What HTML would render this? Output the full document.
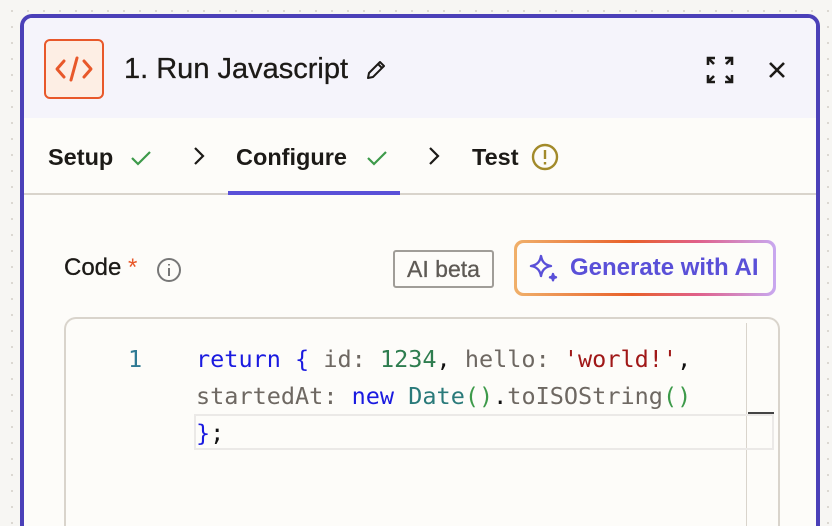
<!DOCTYPE html>
<html><head><style>
*{box-sizing:border-box;margin:0;padding:0}
html,body{width:832px;height:526px;overflow:hidden}
body{background:#f7f6f3;background-image:radial-gradient(#d9d6cf 1px,transparent 1.2px);background-size:16px 16px;background-position:4px 3px;font-family:"Liberation Sans",sans-serif;position:relative}
.panel{position:absolute;left:20px;top:14px;width:800px;height:512px;border:4px solid #4b40b8;border-bottom:none;border-radius:12px 12px 0 0;background:#fdfcf9;overflow:hidden}
.hdr{height:100px;background:#f5f4fb;position:relative}
.logo{position:absolute;left:20px;top:21px;width:60px;height:60px;border:2px solid #e8582a;border-radius:6px;background:#fdeee4}
.title{position:absolute;left:100px;top:35px;font-size:29px;color:#1c1a17;-webkit-text-stroke:0.3px #1c1a17}
.tabs{height:77px;border-bottom:2px solid #d9d4cc;position:relative;font-size:23.5px;font-weight:bold;color:#1c1a17}
.tabs span{position:absolute;top:26px}
.ul{position:absolute;left:204px;bottom:-2px;width:172px;height:4px;background:#5a50d8}
.mono{font-family:"DejaVu Sans Mono",monospace;font-size:23.5px;line-height:37px;white-space:pre}
</style></head><body>
<div class="panel">
 <div class="hdr">
  <div class="logo"><svg width="56" height="56" viewBox="0 0 56 56" fill="none" stroke="#e8582a" stroke-width="3" stroke-linecap="round" stroke-linejoin="round"><path d="M18 20l-7 8 7 8M38 20l7 8-7 8M31 17l-6 22"/></svg></div>
  <div class="title">1. Run Javascript</div>
  <svg style="position:absolute;left:340px;top:40px" width="24" height="24" viewBox="0 0 24 24" fill="none" stroke="#1c1a17" stroke-width="2" stroke-linejoin="round"><path d="M4 20l1-5L16 4l4 4L9 19z M14 6l4 4"/></svg>
  <svg style="position:absolute;left:682px;top:38px" width="28" height="28" viewBox="0 0 28 28" fill="none" stroke="#1c1a17" stroke-width="2.6"><path d="M2 9V2h7M2 2l6 6M26 9V2h-7M26 2l-6 6M2 19v7h7M2 26l6-6M26 19v7h-7M26 26l-6-6"/></svg>
  <svg style="position:absolute;left:744px;top:43px" width="18" height="18" viewBox="0 0 18 18" stroke="#1c1a17" stroke-width="2.6"><path d="M2 2l14 14M16 2L2 16"/></svg>
 </div>
 <div class="tabs">
  <span style="left:24px">Setup</span>
  <svg style="position:absolute;left:106px;top:31px" width="22" height="18" viewBox="0 0 22 18" fill="none" stroke="#3d9a4a" stroke-width="2.2"><path d="M2 9l6 6L20 3"/></svg>
  <svg style="position:absolute;left:168px;top:27px" width="14" height="22" viewBox="0 0 14 22" fill="none" stroke="#1c1a17" stroke-width="2.2"><path d="M3 3l8 8-8 8"/></svg>
  <span style="left:212px">Configure</span>
  <svg style="position:absolute;left:342px;top:31px" width="22" height="18" viewBox="0 0 22 18" fill="none" stroke="#3d9a4a" stroke-width="2.2"><path d="M2 9l6 6L20 3"/></svg>
  <svg style="position:absolute;left:403px;top:27px" width="14" height="22" viewBox="0 0 14 22" fill="none" stroke="#1c1a17" stroke-width="2.2"><path d="M3 3l8 8-8 8"/></svg>
  <span style="left:448px">Test</span>
  <svg style="position:absolute;left:507px;top:25px" width="28" height="28" viewBox="0 0 28 28" fill="none" stroke="#a28a2a" stroke-width="2.4"><circle cx="14" cy="14" r="12"/><path d="M14 7v9M14 19v2.5"/></svg>
  <div class="ul"></div>
 </div>
 <div style="position:absolute;left:40px;top:236px;font-size:24px;color:#1c1a17;-webkit-text-stroke:0.3px #1c1a17">Code <span style="color:#e8582a;-webkit-text-stroke:0">*</span></div>
 <svg style="position:absolute;left:132px;top:239px" width="26" height="26" viewBox="0 0 26 26" fill="none" stroke="#777" stroke-width="2"><circle cx="13" cy="13" r="11"/><path d="M13 11v8M13 7v1.5"/></svg>
 <div style="position:absolute;left:369px;top:232px;width:101px;height:38px;border:2px solid #a09d98;border-radius:3px;font-size:23px;color:#5e5a55;text-align:center;line-height:34px;-webkit-text-stroke:0.3px #5e5a55">AI beta</div>
 <div style="position:absolute;left:490px;top:222px;width:262px;height:56px;border-radius:9px;background:linear-gradient(90deg,#f0b06a,#e8602a 45%,#e0608a 70%,#c8a8f0);padding:3px">
  <div style="width:100%;height:100%;background:#fdfcf9;border-radius:7px;position:relative">
   <svg style="position:absolute;left:11px;top:10px" width="32" height="32" viewBox="0 0 32 32" fill="none" stroke="#5a50d8" stroke-width="2.4" stroke-linejoin="round"><path d="M13 3c1 6 4 9 10 10-6 1-9 4-10 10-1-6-4-9-10-10 6-1 9-4 10-10z"/><path d="M25 21c.4 2 1 3 3 3.3-2 .4-2.6 1-3 3-.4-2-1-2.6-3-3 2-.3 2.6-1 3-3.3z" fill="#5a50d8"/></svg>
   <div style="position:absolute;left:53px;top:11px;font-size:24px;font-weight:bold;color:#5a50d8">Generate with AI</div>
  </div>
 </div>
 <div style="position:absolute;left:40px;top:299px;width:716px;height:215px;border:2px solid #d9d4cc;border-bottom:none;border-radius:12px 12px 0 0;background:#fdfcf9">
  <div style="position:absolute;left:680px;top:4px;width:1px;height:209px;background:#d9d4cc"></div>
  <div style="position:absolute;left:682px;top:93px;width:26px;height:3px;background:#444"></div>
  <div style="position:absolute;left:128px;top:95px;width:580px;height:36px;border:2px solid #ebe9e7"></div>
  <div class="mono" style="position:absolute;left:62px;top:22px;color:#2f7a94">1</div>
  <div class="mono" style="position:absolute;left:130px;top:22px;color:#6e6862"><span style="color:#1a1ae0">return {</span> id: <span style="color:#2e7d4f">1234</span><span style="color:#111">,</span> hello: <span style="color:#a01818">'world!'</span><span style="color:#111">,</span>
startedAt: <span style="color:#1a1ae0">new</span> <span style="color:#2a7a7a">Date</span><span style="color:#3d9a4a">()</span><span style="color:#111">.</span>toISOString<span style="color:#3d9a4a">()</span>
<span style="color:#1a1ae0">}</span><span style="color:#111">;</span></div>
 </div>
</div>
</body></html>
